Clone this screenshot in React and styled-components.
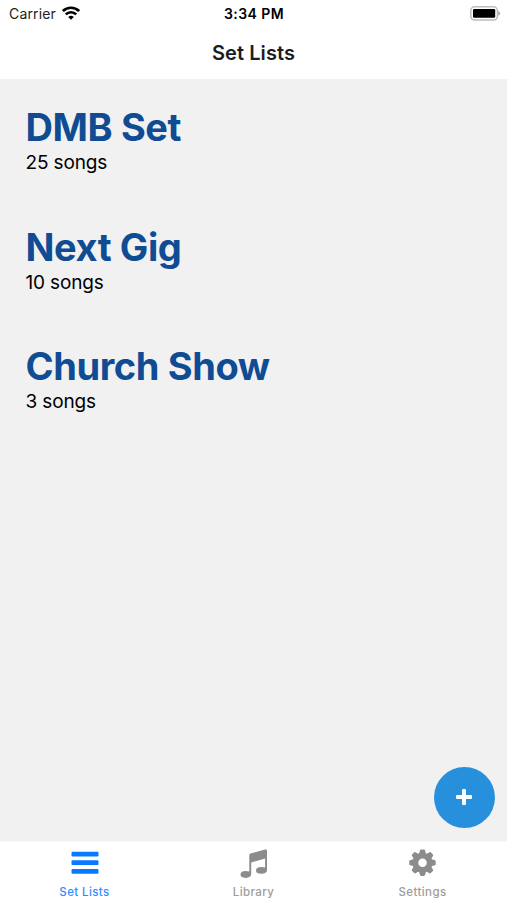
import React from 'react';
import styled, { createGlobalStyle } from 'styled-components';

const setLists = [
    { name: 'DMB Set', count: 25 },
    { name: 'Next Gig', count: 10 },
    { name: 'Church Show', count: 3 },
];

const App = () => {
    return (
        <Screen>
            <GlobalStyle />
            <StatusBar>
                <Carrier>
                    Carrier
                    <WifiIcon />
                </Carrier>
                <Time>3:34 PM</Time>
                <BatteryIcon />
            </StatusBar>
            <Header>Set Lists</Header>
            <Content>
                {setLists.map((set) => (
                    <SetItem key={set.name}>
                        <SetName>{set.name}</SetName>
                        <SongCount>{set.count} songs</SongCount>
                    </SetItem>
                ))}
                <AddButton aria-label='Add'>
                    <PlusIcon />
                </AddButton>
            </Content>
            <TabBar>
                {tabs.map(({ label, icon: Icon, active }) => (
                    <Tab key={label} $active={active}>
                        <Icon />
                        <span>{label}</span>
                    </Tab>
                ))}
            </TabBar>
        </Screen>
    );
};

const WifiIcon = () => (
    <svg width='18' height='14' viewBox='0 0 18 14'>
        <g fill='none' stroke='#000' strokeWidth='2.7'>
            <path d='M.9 5.1a11.5 11.5 0 0 1 16.2 0' />
            <path d='M3.8 8.4a7.4 7.4 0 0 1 10.4 0' />
        </g>
        <path d='M9 13.8 6.2 11a4 4 0 0 1 5.6 0z' />
    </svg>
);

const BatteryIcon = () => (
    <svg width='31' height='15' viewBox='0 0 31 15'>
        <rect x='.8' y='.8' width='26.6' height='13.2' rx='3.8' fill='#fff' stroke='#bdbdbd' strokeWidth='1.5' />
        <rect x='3' y='3' width='22.2' height='8.8' rx='1.2' />
        <path d='M28.2 5c2.6 1 2.6 3.8 0 4.8z' fill='#ababab' />
    </svg>
);

const PlusIcon = () => (
    <svg width='16' height='16' viewBox='0 0 16 16' fill='#fff'>
        <rect x='6' y='0' width='4' height='16' rx='1' />
        <rect x='0' y='6' width='16' height='4' rx='1' />
    </svg>
);

const MenuIcon = () => (
    <svg width='28' height='28' viewBox='0 0 28 28' fill='currentColor'>
        <rect x='.5' y='2.7' width='27' height='4.8' rx='1.2' />
        <rect x='.5' y='11.3' width='27' height='4.8' rx='1.2' />
        <rect x='.5' y='19.9' width='27' height='4.8' rx='1.2' />
    </svg>
);

const MusicIcon = () => (
    <svg width='28' height='29' viewBox='0 0 28 29' fill='currentColor'>
        <path d='M9.3 6.2q0-1.3 1.3-1.7L25.2.6q1.8-.5 1.8 1V21q0 3.8-5.8 3.8-5.2 0-5.2-3.2 0-3.6 5-3.7 2.2 0 4.1.6V9.6L11.2 13.4v11.7q-.1 3.8-5.4 3.8-5.3 0-5.3-3.3 0-3.6 5.1-3.7 2 0 3.7.7z' />
    </svg>
);

const teeth = [0, 45, 90, 135, 180, 225, 270, 315];

const GearIcon = () => (
    <svg width='28' height='28' viewBox='0 0 28 28'>
        <circle cx='13.5' cy='13.7' r='7.1' fill='none' stroke='currentColor' strokeWidth='5.6' />
        {teeth.map((angle) => (
            <path
                key={angle}
                d='M9.9 5.2 11 1.3q.2-.8 1-.8h3q.8 0 1 .8l1.1 3.9z'
                fill='currentColor'
                transform={`rotate(${angle} 13.5 13.7)`}
            />
        ))}
    </svg>
);

const tabs = [
    { label: 'Set Lists', icon: MenuIcon, active: true },
    { label: 'Library', icon: MusicIcon },
    { label: 'Settings', icon: GearIcon },
];

const GlobalStyle = createGlobalStyle`
    * {
        box-sizing: border-box;
    }
    body {
        margin: 0;
        font-family: Inter, 'Liberation Sans', sans-serif;
    }
`;

const Screen = styled.div`
    display: flex;
    flex-direction: column;
    height: 100vh;
    background: #fff;
    color: #000;
`;

const StatusBar = styled.div`
    display: grid;
    grid-template-columns: 1fr auto 1fr;
    align-items: center;
    height: 27px;
    padding: 0 6px 0 9px;
    font-size: 14px;

    > svg {
        justify-self: end;
    }
`;

const Carrier = styled.div`
    display: flex;
    align-items: center;
    gap: 6px;
    letter-spacing: 0.15px;
    color: #222;

    svg {
        margin-top: -2px;
    }
`;

const Time = styled.div`
    margin-left: -2px;
    font-weight: 600;
    letter-spacing: 0.45px;
`;

const Header = styled.h1`
    display: flex;
    align-items: center;
    justify-content: center;
    height: 52px;
    margin: 0;
    font-size: 20px;
    font-weight: 600;
    letter-spacing: 0.1px;
    color: #1c1c1e;
`;

const Content = styled.main`
    position: relative;
    flex: 1;
    padding: 25px 25.5px;
    background: #f1f1f1;
`;

const SetItem = styled.section`
    height: 119.5px;
`;

const SetName = styled.h2`
    margin: 0;
    font-size: 38px;
    line-height: 47px;
    font-weight: 700;
    letter-spacing: -0.4px;
    color: #0f4c93;
`;

const SongCount = styled.p`
    margin: 0;
    font-size: 19px;
    line-height: 24px;
    letter-spacing: -0.15px;
`;

const AddButton = styled.button`
    position: absolute;
    right: 12.5px;
    bottom: 13px;
    display: flex;
    align-items: center;
    justify-content: center;
    width: 61px;
    height: 61px;
    padding: 0 1px 1px 0;
    border: 0;
    border-radius: 50%;
    background: #2790dc;
`;

const TabBar = styled.nav`
    display: flex;
    height: 59px;
    border-top: 1px solid #f8f8f8;
`;

const Tab = styled.div`
    flex: 1;
    display: flex;
    flex-direction: column;
    align-items: center;
    justify-content: space-between;
    padding: 7px 0 0;
    height: 58px;
    font-size: 11.5px;
    line-height: 15px;
    font-weight: 500;
    letter-spacing: 0.4px;
    color: ${(props) => (props.$active ? '#087aff' : '#8c8c8c')};

    span {
        opacity: 0.85;
    }
`;

export default App;
